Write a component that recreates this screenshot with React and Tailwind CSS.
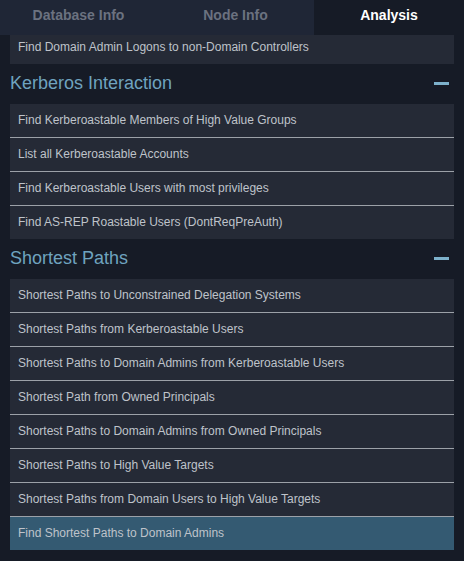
const groups = [
  {
    title: null,
    items: ['Find Domain Admin Logons to non-Domain Controllers'],
  },
  {
    title: 'Kerberos Interaction',
    items: [
      'Find Kerberoastable Members of High Value Groups',
      'List all Kerberoastable Accounts',
      'Find Kerberoastable Users with most privileges',
      'Find AS-REP Roastable Users (DontReqPreAuth)',
    ],
  },
  {
    title: 'Shortest Paths',
    items: [
      'Shortest Paths to Unconstrained Delegation Systems',
      'Shortest Paths from Kerberoastable Users',
      'Shortest Paths to Domain Admins from Kerberoastable Users',
      'Shortest Path from Owned Principals',
      'Shortest Paths to Domain Admins from Owned Principals',
      'Shortest Paths to High Value Targets',
      'Shortest Paths from Domain Users to High Value Targets',
      'Find Shortest Paths to Domain Admins',
    ],
  },
];

const selected = 'Find Shortest Paths to Domain Admins';

function Tab({ label, active, className = '' }) {
  return (
    <div
      className={`flex h-full items-center justify-center pb-[4px] text-[14px] font-bold ${
        active ? 'bg-[#161b26] text-white' : 'bg-[#1f2636] text-[#6b7280]'
      } ${className}`}
    >
      {label}
    </div>
  );
}

function Group({ title, items }) {
  return (
    <div>
      {title ? (
        <div className="flex h-[40px] items-center justify-between pr-[5px]">
          <span className="-mt-[1px] text-[18px] text-[#6fa3bf]">{title}</span>
          <span className="-mt-[2px] h-[3px] w-[15px] bg-[#7db1cb]" />
        </div>
      ) : null}
      <div className="divide-y divide-[#9ca1a8]">
        {items.map((item) => (
          <div
            key={item}
            className={`box-content flex h-[31px] items-center pb-[2px] pl-[8px] text-[12px] text-[#bfc3ca] ${
              item === selected ? 'bg-[#345a72]' : 'bg-[#252a36]'
            }`}
          >
            {item}
          </div>
        ))}
      </div>
    </div>
  );
}

export default function App() {
  return (
    <div
      className="flex h-[561px] w-[464px] flex-col overflow-hidden bg-[#161b26]"
      style={{ fontFamily: '"Liberation Sans", Arial, sans-serif' }}
    >
      <div className="flex h-[35px] shrink-0">
        <Tab label="Database Info" className="w-[157px]" />
        <Tab label="Node Info" className="w-[157px]" />
        <Tab label="Analysis" active className="flex-1" />
      </div>
      <div className="flex-1 overflow-hidden px-[10px]">
        <div className="-mt-[4px]">
          {groups.map((g, i) => (
            <Group key={i} title={g.title} items={g.items} />
          ))}
        </div>
      </div>
    </div>
  );
}
